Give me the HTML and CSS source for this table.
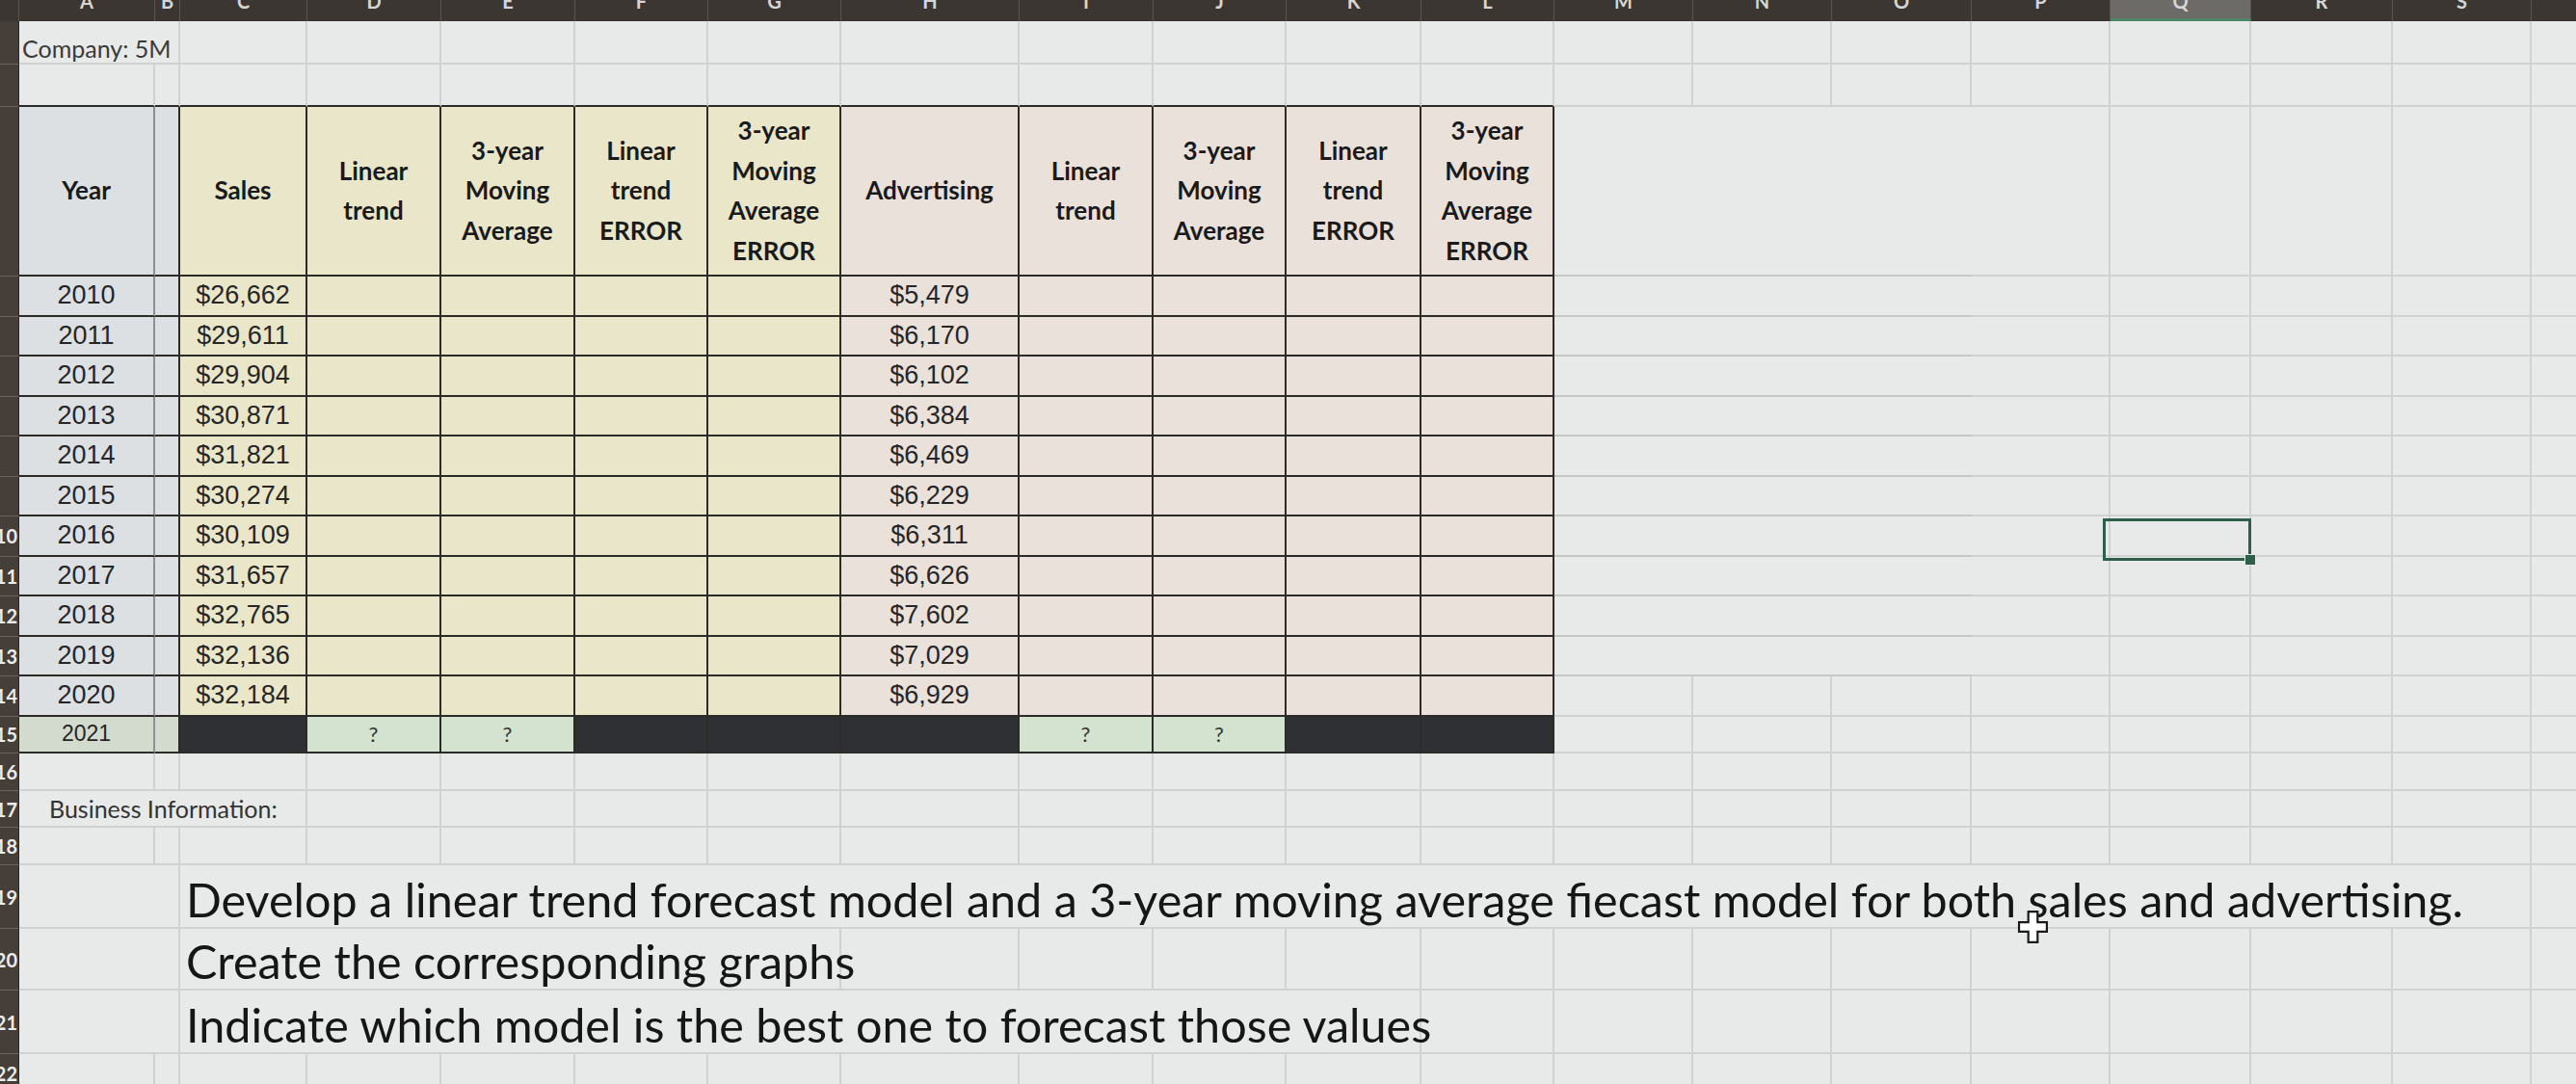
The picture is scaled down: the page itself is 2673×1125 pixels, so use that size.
FILE: index.html
```html
<!DOCTYPE html>
<html>
<head>
<meta charset="utf-8">
<link rel="stylesheet" href="styles.css">
</head>
<body>
<div class="sheet">
  <div class="row r0">
    <div class="ch"></div><div class="ch"><span>A</span></div><div class="ch"><span>B</span></div><div class="ch"><span>C</span></div><div class="ch"><span>D</span></div>
    <div class="ch"><span>E</span></div><div class="ch"><span>F</span></div><div class="ch"><span>G</span></div><div class="ch"><span>H</span></div><div class="ch"><span>I</span></div>
    <div class="ch"><span>J</span></div><div class="ch"><span>K</span></div><div class="ch"><span>L</span></div><div class="ch"><span>M</span></div><div class="ch"><span>N</span></div>
    <div class="ch"><span>O</span></div><div class="ch"><span>P</span></div><div class="ch on"><span>Q</span></div><div class="ch"><span>R</span></div><div class="ch"><span>S</span></div>
    <div class="ch"><span>T</span></div>
  </div>

  <div class="row r1">
    <div class="rh"></div><div class="co">Company: 5M</div>
    <div></div><div></div><div></div><div></div><div></div>
    <div></div><div></div><div></div><div></div><div></div>
    <div></div><div></div><div></div><div></div><div></div>
    <div></div><div></div><div></div>
  </div>

  <div class="row r2">
    <div class="rh"></div>
    <div class="top"></div><div class="top"></div><div class="top"></div><div class="top"></div>
    <div class="top"></div><div class="top"></div><div class="top"></div><div class="top"></div>
    <div class="top"></div><div class="top"></div><div class="top"></div><div class="top"></div>
    <div></div><div></div><div></div><div></div>
    <div></div><div></div><div></div><div></div>
  </div>

  <div class="row r3">
    <div class="rh"></div>
    <div class="t y ya hd">Year</div><div class="t y"></div>
    <div class="t s hd">Sales</div>
    <div class="t s hd">Linear<br>trend</div>
    <div class="t s hd">3-year<br>Moving<br>Average</div>
    <div class="t s hd">Linear<br>trend<br>ERROR</div>
    <div class="t s hd">3-year<br>Moving<br>Average<br>ERROR</div>
    <div class="t p hd">Advertising</div>
    <div class="t p hd">Linear<br>trend</div>
    <div class="t p hd">3-year<br>Moving<br>Average</div>
    <div class="t p hd">Linear<br>trend<br>ERROR</div>
    <div class="t p hd">3-year<br>Moving<br>Average<br>ERROR</div>
    <div class="mo"></div>
    <div></div><div></div><div></div><div></div><div></div>
  </div>

  <div class="row rd">
    <div class="rh"></div><div class="t y ya n">2010</div><div class="t y"></div>
    <div class="t s n">$26,662</div><div class="t s"></div><div class="t s"></div><div class="t s"></div><div class="t s"></div>
    <div class="t p n">$5,479</div><div class="t p"></div><div class="t p"></div><div class="t p"></div><div class="t p"></div>
    <div class="mo"></div><div></div><div></div><div></div><div></div><div></div>
  </div>
  <div class="row rd">
    <div class="rh"></div><div class="t y ya n">2011</div><div class="t y"></div>
    <div class="t s n">$29,611</div><div class="t s"></div><div class="t s"></div><div class="t s"></div><div class="t s"></div>
    <div class="t p n">$6,170</div><div class="t p"></div><div class="t p"></div><div class="t p"></div><div class="t p"></div>
    <div class="mo"></div><div></div><div></div><div></div><div></div><div></div>
  </div>
  <div class="row rd">
    <div class="rh"></div><div class="t y ya n">2012</div><div class="t y"></div>
    <div class="t s n">$29,904</div><div class="t s"></div><div class="t s"></div><div class="t s"></div><div class="t s"></div>
    <div class="t p n">$6,102</div><div class="t p"></div><div class="t p"></div><div class="t p"></div><div class="t p"></div>
    <div class="mo"></div><div></div><div></div><div></div><div></div><div></div>
  </div>
  <div class="row rd">
    <div class="rh"></div><div class="t y ya n">2013</div><div class="t y"></div>
    <div class="t s n">$30,871</div><div class="t s"></div><div class="t s"></div><div class="t s"></div><div class="t s"></div>
    <div class="t p n">$6,384</div><div class="t p"></div><div class="t p"></div><div class="t p"></div><div class="t p"></div>
    <div class="mo"></div><div></div><div></div><div></div><div></div><div></div>
  </div>
  <div class="row rd">
    <div class="rh"></div><div class="t y ya n">2014</div><div class="t y"></div>
    <div class="t s n">$31,821</div><div class="t s"></div><div class="t s"></div><div class="t s"></div><div class="t s"></div>
    <div class="t p n">$6,469</div><div class="t p"></div><div class="t p"></div><div class="t p"></div><div class="t p"></div>
    <div class="mo"></div><div></div><div></div><div></div><div></div><div></div>
  </div>
  <div class="row rd">
    <div class="rh"></div><div class="t y ya n">2015</div><div class="t y"></div>
    <div class="t s n">$30,274</div><div class="t s"></div><div class="t s"></div><div class="t s"></div><div class="t s"></div>
    <div class="t p n">$6,229</div><div class="t p"></div><div class="t p"></div><div class="t p"></div><div class="t p"></div>
    <div class="mo"></div><div></div><div></div><div></div><div></div><div></div>
  </div>
  <div class="row rd">
    <div class="rh">10</div><div class="t y ya n">2016</div><div class="t y"></div>
    <div class="t s n">$30,109</div><div class="t s"></div><div class="t s"></div><div class="t s"></div><div class="t s"></div>
    <div class="t p n">$6,311</div><div class="t p"></div><div class="t p"></div><div class="t p"></div><div class="t p"></div>
    <div class="mo"></div><div></div><div class="sel"></div><div></div><div></div><div></div>
  </div>
  <div class="row rd">
    <div class="rh">11</div><div class="t y ya n">2017</div><div class="t y"></div>
    <div class="t s n">$31,657</div><div class="t s"></div><div class="t s"></div><div class="t s"></div><div class="t s"></div>
    <div class="t p n">$6,626</div><div class="t p"></div><div class="t p"></div><div class="t p"></div><div class="t p"></div>
    <div class="mo"></div><div></div><div></div><div></div><div></div><div></div>
  </div>
  <div class="row rd">
    <div class="rh">12</div><div class="t y ya n">2018</div><div class="t y"></div>
    <div class="t s n">$32,765</div><div class="t s"></div><div class="t s"></div><div class="t s"></div><div class="t s"></div>
    <div class="t p n">$7,602</div><div class="t p"></div><div class="t p"></div><div class="t p"></div><div class="t p"></div>
    <div class="mo"></div><div></div><div></div><div></div><div></div><div></div>
  </div>
  <div class="row rd">
    <div class="rh">13</div><div class="t y ya n">2019</div><div class="t y"></div>
    <div class="t s n">$32,136</div><div class="t s"></div><div class="t s"></div><div class="t s"></div><div class="t s"></div>
    <div class="t p n">$7,029</div><div class="t p"></div><div class="t p"></div><div class="t p"></div><div class="t p"></div>
    <div class="mo"></div><div></div><div></div><div></div><div></div><div></div>
  </div>
  <div class="row rd">
    <div class="rh">14</div><div class="t y ya n">2020</div><div class="t y"></div>
    <div class="t s n">$32,184</div><div class="t s"></div><div class="t s"></div><div class="t s"></div><div class="t s"></div>
    <div class="t p n">$6,929</div><div class="t p"></div><div class="t p"></div><div class="t p"></div><div class="t p"></div>
    <div></div><div></div><div></div><div></div>
    <div></div><div></div><div></div><div></div>
  </div>

  <div class="row r15">
    <div class="rh">15</div><div class="t gy ya n sm">2021</div><div class="t gy"></div>
    <div class="t k"></div><div class="t g q">?</div><div class="t g q">?</div><div class="t k"></div><div class="t k"></div>
    <div class="t k"></div><div class="t g q">?</div><div class="t g q">?</div><div class="t k"></div><div class="t k"></div>
    <div></div><div></div><div></div><div></div>
    <div></div><div></div><div></div><div></div>
  </div>

  <div class="row r16">
    <div class="rh">16</div>
    <div></div><div></div><div></div><div></div><div></div>
    <div></div><div></div><div></div><div></div><div></div>
    <div></div><div></div><div></div><div></div><div></div>
    <div></div><div></div><div></div><div></div><div></div>
  </div>

  <div class="row r17">
    <div class="rh">17</div><div class="bi">Business Information:</div>
    <div></div><div></div><div></div><div></div><div></div>
    <div></div><div></div><div></div><div></div><div></div>
    <div></div><div></div><div></div><div></div><div></div>
    <div></div><div></div>
  </div>

  <div class="row r18">
    <div class="rh">18</div>
    <div></div><div></div><div></div><div></div><div></div>
    <div></div><div></div><div></div><div></div><div></div>
    <div></div><div></div><div></div><div></div><div></div>
    <div></div><div></div><div></div><div></div><div></div>
  </div>

  <div class="row r19">
    <div class="rh">19</div><div class="ab"></div>
    <div class="big c19">Develop a linear trend forecast model and a 3-year moving average fiecast model for both sales and advertising.</div>
    <div></div>
  </div>

  <div class="row r20">
    <div class="rh">20</div><div class="ab"></div>
    <div class="big c20">Create the corresponding graphs</div>
    <div></div><div></div><div></div><div></div><div></div>
    <div></div><div></div><div></div><div></div><div></div>
    <div></div><div></div><div></div>
  </div>

  <div class="row r21">
    <div class="rh">21</div><div class="ab"></div>
    <div class="big c21">Indicate which model is the best one to forecast those values</div>
    <div></div><div></div><div></div><div></div><div></div>
    <div></div><div></div><div></div><div></div>
  </div>

  <div class="row r22">
    <div class="rh">22</div>
    <div></div><div></div><div></div><div></div><div></div>
    <div></div><div></div><div></div><div></div><div></div>
    <div></div><div></div><div></div><div></div><div></div>
    <div></div><div></div><div></div><div></div><div></div>
  </div>
</div>
<svg class="cursor" viewBox="0 0 24 26" width="33" height="36" aria-hidden="true"><path d="M8.5 1.5h7v8h7v7h-7v8h-7v-8h-7v-7h7z" fill="#ffffff" stroke="#1a1a1a" stroke-width="1.6"/></svg>
</body>
</html>
```
FILE: styles.css
```css
* { box-sizing: border-box; }
html, body { margin: 0; padding: 0; }
body {
  width: 2673px;
  height: 1125px;
  overflow: hidden;
  position: relative;
  background: #e8eaea;
}
.sheet {
  display: flex;
  flex-direction: column;
  width: 2773px;
  font-family: Lato, "Liberation Sans", sans-serif;
  color: #2a2a2a;
}
.row {
  display: grid;
  grid-template-columns: 20px 141px 26px 132px 139px 139px 138px 138px 185px 139px 138px 140px 138px 144px 144px 145px 144px 146px 147px 144px 146px;
  grid-template-rows: 100%;
  flex: none;
}
.r0 { height: 22px; }
.r1 { height: 45px; }
.r2 { height: 44px; }
.r3 { height: 176px; }
.rd { height: 41.5px; }
.r15 { height: 38.5px; }
.r16 { height: 39px; }
.r17 { height: 38px; }
.r18 { height: 39px; }
.r19 { height: 66px; }
.r20 { height: 64px; }
.r21 { height: 66px; }
.r22 { height: 40px; }
.row > div {
  display: flex;
  align-items: center;
  min-width: 0;
  white-space: nowrap;
  border-right: 2px solid #cfd1d2;
  border-bottom: 2px solid #cfd1d2;
}
.row > .ch {
  background: #3b3631;
  border-right: 1px solid #59534d;
  border-bottom: 0;
  overflow: hidden;
  justify-content: center;
  align-items: flex-start;
  color: #d6d6d6;
  font-weight: 700;
  font-size: 20px;
}
.ch span { line-height: 20px; margin-top: -9px; }
.row > .ch.on { background: #6c6b68; border-bottom: 3px solid #4a8769; }
.row > .rh {
  background: #453e39;
  border-right: 1px solid #2c2825;
  border-bottom: 1px solid #6a625b;
  overflow: hidden;
  justify-content: flex-end;
  padding-right: 1px;
  color: #ececec;
  font-weight: 700;
  font-size: 20px;
}
.row > .top { border-bottom-color: #2c2b27; }
.row > .t { border-right-color: #2c2b27; border-bottom-color: #2c2b27; }
.row > .ya { border-right-color: #8e9194; }
.y { background: #dde0e3; }
.s { background: #e9e6ca; }
.p { background: #eae1da; }
.g { background: #d4e3d0; }
.gy { background: #d2dbcd; }
.k { background: #2f3033; }
.hd {
  justify-content: center;
  text-align: center;
  white-space: normal !important;
  font-weight: 700;
  font-size: 26px;
  line-height: 41.5px;
  color: #1a1a1a;
}
.n {
  justify-content: center;
  font-family: "Liberation Sans", Arial, sans-serif;
  font-size: 27px;
  color: #262626;
}
.sm { font-size: 23px; }
.q { justify-content: center; font-size: 22px; color: #333333; }
.mo { grid-column: span 3; }
.row > .mo { border-right: 0; border-bottom-color: #c5c7c8; }
.row > .co {
  grid-column: span 2;
  align-items: flex-end;
  padding-left: 3px;
  font-size: 25px;
  line-height: 1.2;
  color: #3a3a3a;
}
.row > .bi {
  grid-column: span 3;
  padding-left: 31px;
  font-size: 25px;
  color: #333333;
}
.ab { grid-column: span 2; }
.row > .big {
  align-items: flex-end;
  padding-left: 6px;
  padding-bottom: 0;
  font-size: 48.5px;
  line-height: 1.2;
  color: #161616;
  overflow: visible;
}
.c19 { grid-column: span 17; }
.c20 { grid-column: span 5; }
.c21 { grid-column: span 9; }
.sel { position: relative; }
.sel::before {
  content: "";
  position: absolute;
  left: -8px;
  right: -2px;
  top: 2px;
  bottom: -6px;
  border: 3px solid #2f5e4b;
}
.sel::after {
  content: "";
  position: absolute;
  right: -7px;
  bottom: -11px;
  width: 10px;
  height: 10px;
  background: #2f5e4b;
  border: 1px solid #e8eaea;
}
.cursor {
  position: absolute;
  left: 2093px;
  top: 944px;
}
```
